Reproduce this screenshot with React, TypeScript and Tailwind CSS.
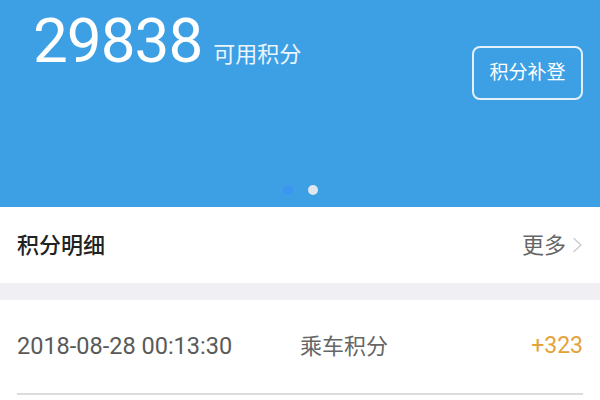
import React from 'react';

const font = "font-['Roboto','Noto_Sans_CJK_SC',sans-serif]";

function Chevron() {
  return (
    <svg width="11" height="16" viewBox="0 0 11 16" fill="none" className="ml-[6px]">
      <path d="M2 1.5 L9 8 L2 14.5" stroke="#cfcfcf" strokeWidth="1.6" strokeLinecap="round" strokeLinejoin="round" />
    </svg>
  );
}

export default function App() {
  const records = [{ time: '2018-08-28 00:13:30', type: '乘车积分', points: '+323' }];

  return (
    <div className={`w-[600px] h-[400px] overflow-hidden bg-white ${font}`}>
      {/* Header */}
      <div className="h-[207px] bg-[#3d9fe4] flex flex-col">
        <div className="flex justify-between items-start pl-[33px] pr-[17px]">
          <div className="flex items-baseline pt-[10px]">
            <span className="text-[62px] leading-[62px] text-white tracking-[-1px]">29838</span>
            <span className="ml-[11px] text-[22px] text-white/90">可用积分</span>
          </div>
          <button className="mt-[46px] w-[111px] h-[54px] rounded-[8px] border-2 border-white/85 text-white text-[19px] flex items-center justify-center">
            积分补登
          </button>
        </div>
        <div className="mt-auto mb-[12px] flex justify-center gap-[15px]">
          <span className="w-[10px] h-[10px] rounded-full bg-[#3c95f0]" />
          <span className="w-[10px] h-[10px] rounded-full bg-[#dfe6ee]" />
        </div>
      </div>

      {/* Section title */}
      <div className="h-[76px] flex items-center justify-between px-[17px]">
        <span className="text-[22px] font-medium text-[#222]">积分明细</span>
        <div className="flex items-center">
          <span className="text-[22px] text-[#666]">更多</span>
          <Chevron />
        </div>
      </div>

      <div className="h-[17px] bg-[#efeff4]" />

      {/* Records */}
      {records.map((r) => (
        <div key={r.time} className="mx-[17px] h-[95px] flex items-center border-b-[2px] border-[#dcdcdc]">
          <span className="w-[283px] text-[23.5px] text-[#5a5a5a]">{r.time}</span>
          <span className="flex-1 text-[22px] text-[#666]">{r.type}</span>
          <span className="text-[23px] text-[#e4a23a]">{r.points}</span>
        </div>
      ))}
    </div>
  );
}
